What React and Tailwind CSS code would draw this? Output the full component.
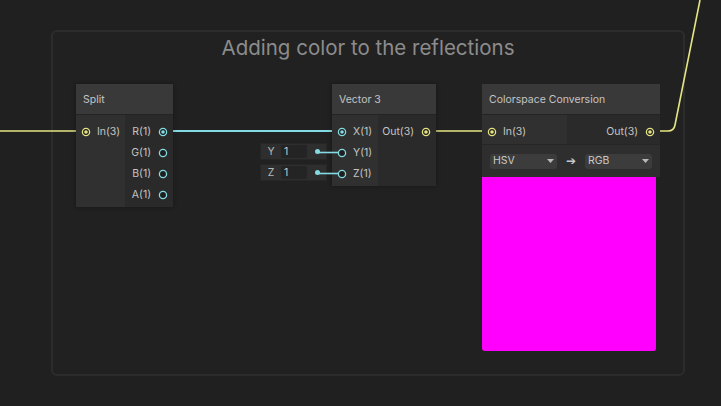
import React from "react";

const YEL = "#e4e482";
const CYA = "#84dbe3";

function Port({ color, connected }) {
  return (
    <svg width="10" height="10" viewBox="0 0 10 10" className="shrink-0">
      <circle cx="5" cy="5" r="3.6" fill="#1e1e1e" stroke={color} strokeWidth="1.3" />
      {connected && <circle cx="5" cy="5" r="1.8" fill={color} />}
    </svg>
  );
}

function InRow({ label, color, connected }) {
  return (
    <div className="flex items-center h-[21px] pl-[5px] gap-[6px]">
      <Port color={color} connected={connected} />
      <span>{label}</span>
    </div>
  );
}

function OutRow({ label, color, connected }) {
  return (
    <div className="flex items-center justify-end h-[21px] pr-[5px] gap-[7px]">
      <span>{label}</span>
      <Port color={color} connected={connected} />
    </div>
  );
}

function Header({ title }) {
  return (
    <div className="h-[31px] bg-[#393939] border-b border-[#242424] flex items-center px-[7px] pt-[1px] text-[10.5px] text-[#c4c4c4]">
      {title}
    </div>
  );
}

function InlineField({ label, top }) {
  return (
    <div
      className="absolute left-[260px] w-[67px] h-[17px] bg-[#2e2e2e] border border-[#262626] flex items-center text-[10.5px] text-[#b8b8b8]"
      style={{ top }}
    >
      <span className="w-[20px] text-center">{label}</span>
      <div className="w-[26px] h-[13px] bg-[#242424] rounded-[2px] pl-[3px] leading-[13px] text-[#c8c8c8]">1</div>
      <div className="ml-auto mr-[6px] w-[5px] h-[5px] rounded-full bg-[#84dbe3]" />
    </div>
  );
}

export default function App() {
  return (
    <div
      className="relative w-[721px] h-[406px] bg-[#202020] overflow-hidden text-[#c4c4c4]"
      style={{ fontFamily: "Inter, 'Noto Sans', sans-serif" }}
    >
      {/* Group frame */}
      <div className="absolute left-[51px] top-[30px] w-[634px] h-[346px] rounded-[6px] border-2 border-[#2c2c2c] bg-[#212121]">
        <div className="text-center text-[20.5px] text-[#8c8c8c] mt-[2px] leading-[28px]">
          Adding color to the reflections
        </div>
      </div>

      {/* Wires */}
      <svg className="absolute left-0 top-0" width="721" height="406" viewBox="0 0 721 406">
        <path d="M0 131 H86" stroke={YEL} strokeWidth="1.6" fill="none" />
        <path d="M163 131 H342" stroke={CYA} strokeWidth="1.8" fill="none" />
        <path d="M426 131 H491" stroke={YEL} strokeWidth="1.6" fill="none" />
        <path d="M650 131 H668 Q674 131 675 125 L700 0" stroke={YEL} strokeWidth="1.6" fill="none" />
      </svg>

      {/* Split node */}
      <div className="absolute left-[76px] top-[84px] w-[97px] h-[123px] flex flex-col text-[10.5px] shadow-[0_0_4px_rgba(0,0,0,0.35)]">
        <Header title="Split" />
        <div className="flex flex-1">
          <div className="w-[49px] bg-[#303030] pt-[6px]">
            <InRow label="In(3)" color={YEL} connected />
          </div>
          <div className="flex-1 bg-[#2a2a2a] pt-[6px]">
            <OutRow label="R(1)" color={CYA} connected />
            <OutRow label="G(1)" color={CYA} />
            <OutRow label="B(1)" color={CYA} />
            <OutRow label="A(1)" color={CYA} />
          </div>
        </div>
      </div>

      {/* Inline inputs */}
      <InlineField label="Y" top={143} />
      <InlineField label="Z" top={164} />

      {/* Vector 3 node */}
      <div className="absolute left-[332px] top-[84px] w-[104px] h-[102px] flex flex-col text-[10.5px] shadow-[0_0_4px_rgba(0,0,0,0.35)]">
        <Header title="Vector 3" />
        <div className="flex flex-1">
          <div className="w-[46px] bg-[#303030] pt-[6px]">
            <InRow label="X(1)" color={CYA} connected />
            <InRow label="Y(1)" color={CYA} />
            <InRow label="Z(1)" color={CYA} />
          </div>
          <div className="flex-1 bg-[#2a2a2a] pt-[6px]">
            <OutRow label="Out(3)" color={YEL} connected />
          </div>
        </div>
      </div>

      {/* Inline wires over the fields */}
      <svg className="absolute left-0 top-0 pointer-events-none" width="721" height="406" viewBox="0 0 721 406">
        <path d="M319 152.5 H338" stroke={CYA} strokeWidth="1.6" fill="none" />
        <path d="M319 173.5 H338" stroke={CYA} strokeWidth="1.6" fill="none" />
      </svg>

      {/* Colorspace Conversion node */}
      <div className="absolute left-[482px] top-[84px] w-[178px] flex flex-col text-[10.5px]">
        <Header title="Colorspace Conversion" />
        <div className="flex h-[30px] border-b border-[#262626]">
          <div className="w-[85px] bg-[#303030] pt-[6px]">
            <InRow label="In(3)" color={YEL} connected />
          </div>
          <div className="flex-1 bg-[#2a2a2a] pt-[6px]">
            <OutRow label="Out(3)" color={YEL} connected />
          </div>
        </div>
        <div className="h-[32px] bg-[#2e2e2e] flex items-center px-[8px]">
          <div className="w-[67px] h-[15px] bg-[#3c3c3c] rounded-[3px] flex items-center justify-between px-[3px] text-[#c8c8c8]">
            <span>HSV</span>
            <svg width="7" height="4" viewBox="0 0 7 4"><path d="M0 0 H7 L3.5 4 Z" fill="#b8b8b8" /></svg>
          </div>
          <span className="w-[28px] text-center text-[12px] text-[#c8c8c8]">➔</span>
          <div className="w-[67px] h-[15px] bg-[#3c3c3c] rounded-[3px] flex items-center justify-between px-[3px] text-[#c8c8c8]">
            <span>RGB</span>
            <svg width="7" height="4" viewBox="0 0 7 4"><path d="M0 0 H7 L3.5 4 Z" fill="#b8b8b8" /></svg>
          </div>
        </div>
        <div className="w-[174px] h-[174px] bg-[#ff00ff] rounded-b-[3px]" />
      </div>
    </div>
  );
}
